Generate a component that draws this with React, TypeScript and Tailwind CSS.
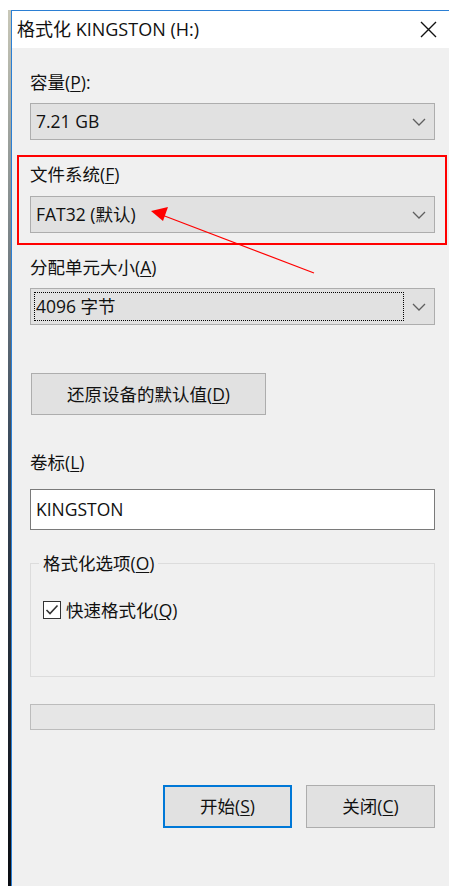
import React from 'react';

const FONT = { fontFamily: '"Open Sans", "Noto Sans CJK SC", sans-serif' };

// Label with an underlined access key, e.g. 容量(P)
function Accel({ text, k, suffix = '' }: { text: string; k: string; suffix?: string }) {
  return (
    <span>
      {text}(<span className="underline underline-offset-2">{k}</span>){suffix}
    </span>
  );
}

function Chevron() {
  return (
    <svg width="14" height="8" viewBox="0 0 14 8" className="shrink-0">
      <path d="M1 1 L7 7 L13 1" fill="none" stroke="#5f5f5f" strokeWidth="1.3" />
    </svg>
  );
}

function Combo({ value, focused = false }: { value: string; focused?: boolean }) {
  return (
    <div className="flex h-[37px] items-center border border-[#adadad] bg-[#e1e1e1] pr-[8px]">
      {focused ? (
        <div className="ml-[3px] flex h-[29px] flex-1 items-center border border-dotted border-black pl-[1px]">
          {value}
        </div>
      ) : (
        <div className="flex-1 pl-[5px]">{value}</div>
      )}
      <div className="flex w-[22px] justify-end">
        <Chevron />
      </div>
    </div>
  );
}

function Button({ children, primary = false, className = '' }: { children: React.ReactNode; primary?: boolean; className?: string }) {
  return (
    <div
      className={`flex items-center justify-center bg-[#e1e1e1] ${
        primary ? 'border-2 border-[#0078d7]' : 'border border-[#adadad]'
      } ${className}`}
    >
      {children}
    </div>
  );
}

export default function App() {
  return (
    <div className="relative flex h-[886px] w-[449px] flex-col overflow-hidden bg-white text-[17.5px] text-[#111]" style={FONT}>
      <div className="h-[10px] shrink-0" />
      <div className="flex flex-1">
        <div className="w-[8px] shrink-0 bg-white" />
        {/* desktop peeking out behind the dialog */}
        <div className="w-[3px] shrink-0 bg-gradient-to-b from-[#c9c8b8] via-[#3a4a5c] to-[#0b0d12]" />
        <div className="flex flex-1 flex-col border-l border-t border-[#2b7fd4]">
          {/* title bar */}
          <div className="flex h-[37px] shrink-0 items-center justify-between bg-white pl-[5px] pr-[12px]">
            <span className="text-[18px]">格式化 KINGSTON (H:)</span>
            <svg width="17" height="17" viewBox="0 0 17 17">
              <path d="M1 1 L16 16 M16 1 L1 16" stroke="#111" strokeWidth="1.4" />
            </svg>
          </div>

          <div className="flex flex-1 flex-col bg-[#f0f0f0] pl-[18px] pr-[14px] pt-[24px]">
            <div className="h-[20px] leading-[20px]">
              <Accel text="容量" k="P" suffix=":" />
            </div>
            <div className="mt-[11px]">
              <Combo value="7.21 GB" />
            </div>

            <div className="mt-[24px] h-[20px] leading-[20px]">
              <Accel text="文件系统" k="F" />
            </div>
            <div className="mt-[12px]">
              <Combo value="FAT32 (默认)" />
            </div>

            <div className="mt-[24px] h-[20px] leading-[20px]">
              <Accel text="分配单元大小" k="A" />
            </div>
            <div className="mt-[11px]">
              <Combo value="4096 字节" focused />
            </div>

            <Button className="ml-[1px] mt-[48px] h-[42px] w-[235px]">
              <Accel text="还原设备的默认值" k="D" />
            </Button>

            <div className="mt-[37px] h-[20px] leading-[20px]">
              <Accel text="卷标" k="L" />
            </div>
            <div className="mt-[17px] flex h-[41px] items-center border border-[#7a7a7a] bg-white pl-[5px]">
              KINGSTON
            </div>

            {/* format options group */}
            <div className="relative mt-[33px] h-[114px] border border-[#dcdcdc] px-[12px] pt-[33px]">
              <div className="absolute left-[8px] top-[-11px] bg-[#f0f0f0] px-[4px] leading-[20px]">
                <Accel text="格式化选项" k="O" />
              </div>
              <div className="flex items-center gap-[5px]">
                <div className="flex h-[18px] w-[18px] items-center justify-center border border-[#333] bg-white">
                  <svg width="14" height="12" viewBox="0 0 14 12">
                    <path d="M1.5 6 L5 9.5 L12.5 1.5" fill="none" stroke="#333" strokeWidth="1.6" />
                  </svg>
                </div>
                <Accel text="快速格式化" k="Q" />
              </div>
            </div>

            <div className="mt-[27px] h-[26px] border border-[#bcbcbc] bg-[#e6e6e6]" />

            <div className="mt-[55px] flex justify-end gap-[14px]">
              <Button primary className="h-[43px] w-[129px]">
                <Accel text="开始" k="S" />
              </Button>
              <Button className="h-[43px] w-[129px]">
                <Accel text="关闭" k="C" />
              </Button>
            </div>
          </div>
        </div>
      </div>

      {/* red annotation around the file system field */}
      <div className="pointer-events-none absolute left-[17px] top-[155px] h-[90px] w-[430px] border-2 border-[#ff0000]" />
      <svg className="pointer-events-none absolute left-0 top-0" width="449" height="886">
        <line x1="314" y1="273" x2="162" y2="215" stroke="#ff0000" strokeWidth="1.2" />
        <path d="M151 211 L168 207 L163 221 Z" fill="#ff0000" />
      </svg>
    </div>
  );
}
